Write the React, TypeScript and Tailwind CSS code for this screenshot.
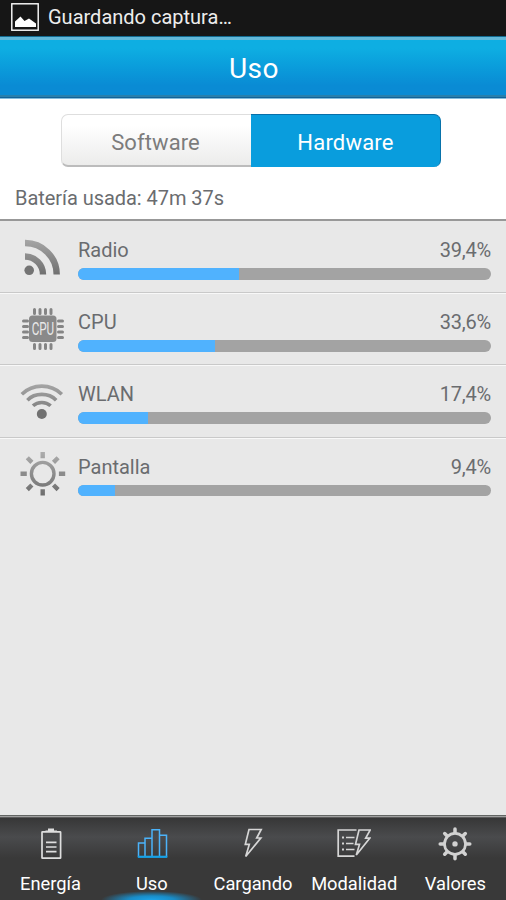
import type { ReactNode } from 'react';

interface UsageItem {
  name: string;
  value: number;
  label: string;
  icon: ReactNode;
}

interface NavItem {
  name: string;
  icon: ReactNode;
  active?: boolean;
}

function PictureIcon() {
  return (
    <svg width="28" height="28" viewBox="0 0 28 28" className="shrink-0">
      <rect x="0.8" y="0.8" width="26.4" height="26.4" fill="none" stroke="#fff" strokeWidth="1.4" />
      <path d="M4 24v-5.500L9.500 13.500l4 4.500 4.500-2.500 7 5V24z" fill="#fff" />
    </svg>
  );
}

// Shared grey gradient used by the list icons
function GreyFade({ id, height }: { id: string; height: number }) {
  return (
    <defs>
      <linearGradient id={id} gradientUnits="userSpaceOnUse" x1="0" y1="0" x2="0" y2={height}>
        <stop offset="0" stopColor="#adadad" />
        <stop offset="1" stopColor="#6c6c6c" />
      </linearGradient>
    </defs>
  );
}

function RadioIcon() {
  return (
    <svg width="46" height="46" viewBox="0 0 46 46">
      <GreyFade id="radio" height={42} />
      <g fill="none" stroke="url(#radio)" strokeWidth="6.400">
        <path d="M5 8A31.500 31.500 0 0 1 36.700 39.500" />
        <path d="M5 21.500A18 18 0 0 1 23 39.500" />
      </g>
      <circle cx="9.200" cy="35.300" r="4.800" fill="#747474" />
    </svg>
  );
}

function CpuIcon() {
  return (
    <svg width="46" height="46" viewBox="0 0 46 46">
      <g stroke="#858585" strokeWidth="3" strokeLinecap="round">
        <path d="M14.500 2.500v4M20 2.500v4M25.500 2.500v4M31 2.500v4M14.500 37.500v4M20 37.500v4M25.500 37.500v4M31 37.500v4" />
        <path d="M3.500 14h4M3.500 19.500h4M3.500 25h4M3.500 30.500h4M38.500 14h4M38.500 19.500h4M38.500 25h4M38.500 30.500h4" />
      </g>
      <rect x="9" y="8.500" width="27.500" height="26.500" rx="3.500" fill="#898989" />
      <text
        x="22.900"
        y="28.300"
        textAnchor="middle"
        textLength="22.500"
        lengthAdjust="spacingAndGlyphs"
        fill="#e8e8e8"
        fontSize="18"
        className="font-['Roboto',sans-serif]"
      >
        CPU
      </text>
    </svg>
  );
}

function WlanIcon() {
  return (
    <svg width="46" height="46" viewBox="0 0 46 46">
      <GreyFade id="wlan" height={44} />
      <g fill="none" stroke="url(#wlan)" strokeWidth="3.600">
        <path d="M1.800 15.200Q10 7.100 21.800 7.100T41.800 15.200" />
        <path d="M7.400 21.200Q13 15.400 21.800 15.400T36.200 21.200" />
        <path d="M13 26.800Q16.500 23.500 21.800 23.500T30.600 26.800" />
      </g>
      <circle cx="21.800" cy="35" r="5" fill="#717171" />
    </svg>
  );
}

function ScreenIcon() {
  return (
    <svg width="46" height="46" viewBox="0 0 46 46">
      <GreyFade id="screen" height={44} />
      <g fill="none" stroke="url(#screen)">
        <circle cx="22.700" cy="21.700" r="11.300" strokeWidth="3.400" />
        <path
          strokeWidth="4.400"
          d="M22.700 0v6.200M22.700 37.200v6.200M7.300 5.800l4.600 4.600M33.500 33l4.600 4.600M38.100 5.800l-4.600 4.600M11.900 33l-4.600 4.600"
        />
      </g>
      <path d="M.5 19.500h6.300v4.400H.5zM38.900 19.500h6.300v4.400h-6.300z" fill="#8b8b8b" />
    </svg>
  );
}

function BatteryIcon() {
  return (
    <svg width="34" height="34" viewBox="0 0 34 34">
      <g fill="none" stroke="#dedede" strokeWidth="1.700">
        <rect x="8" y="4.800" width="18.600" height="26.400" rx="0.500" />
        <path d="M12 15.300h10.500M12 20h10.500M12 24.700h10.500" />
      </g>
      <path d="M11.500 5V3.500h2.500V1.500h6v2H23V5z" fill="#dedede" />
    </svg>
  );
}

function ChartIcon() {
  return (
    <svg width="34" height="34" viewBox="0 0 34 34">
      <g fill="none" stroke="#4bb3fa" strokeWidth="1.500">
        <path d="M3.500 30V16h6.500v14M10 30V11.200h7V30M17 30V2.700h7.500V30M24.500 8.300h7V30" />
      </g>
      <path d="M2.800 28.700h29.500v2.200H2.800z" fill="#16a2e8" />
    </svg>
  );
}

function BoltIcon() {
  return (
    <svg width="34" height="34" viewBox="0 0 34 34">
      <path
        d="M13 2.500H25.200L20.700 11H24.800L9.700 29.500L13.300 17.400H9.300Z"
        fill="none"
        stroke="#d6d6d6"
        strokeWidth="1.700"
      />
    </svg>
  );
}

function ModeIcon() {
  return (
    <svg width="34" height="34" viewBox="0 0 34 34">
      <g fill="none" stroke="#d6d6d6" strokeWidth="1.700">
        <path d="M19.500 3H1.200v26.200h16.300" />
        <path d="M22 3h11.200l-4.500 8.200h4L19.300 28l3.200-10.600h-4z" />
        <path d="M9 10.500h8.500M9 16.500h7.500M9 22.500h8.500" />
        <path d="M5 10.500h2M5 16.500h2M5 22.500h2" strokeWidth="2" />
      </g>
    </svg>
  );
}

function GearIcon() {
  return (
    <svg width="34" height="34" viewBox="0 0 34 34">
      <g stroke="#d2d2d2" fill="none">
        <circle cx="17" cy="16.900" r="10.500" strokeWidth="2.700" />
        <path
          strokeWidth="3.500"
          strokeLinecap="round"
          d="M17 2.100v3.500M17 28.300v3.500M2.200 16.900h3.500M28.300 16.900h3.500M6.700 6.600l2 2M25.300 25.200l2 2M27.300 6.600l-2 2M8.700 25.200l-2 2"
        />
      </g>
      <circle cx="17" cy="16.900" r="2.700" fill="#d2d2d2" />
    </svg>
  );
}

const usage: UsageItem[] = [
  { name: 'Radio', value: 39.4, label: '39,4%', icon: <RadioIcon /> },
  { name: 'CPU', value: 33.6, label: '33,6%', icon: <CpuIcon /> },
  { name: 'WLAN', value: 17.4, label: '17,4%', icon: <WlanIcon /> },
  { name: 'Pantalla', value: 9.4, label: '9,4%', icon: <ScreenIcon /> },
];

const nav: NavItem[] = [
  { name: 'Energía', icon: <BatteryIcon /> },
  { name: 'Uso', icon: <ChartIcon />, active: true },
  { name: 'Cargando', icon: <BoltIcon /> },
  { name: 'Modalidad', icon: <ModeIcon /> },
  { name: 'Valores', icon: <GearIcon /> },
];

function UsageRow({ item, last }: { item: UsageItem; last: boolean }) {
  return (
    <div
      className={`flex h-[72.2px] pl-5 pr-[15px] ${last ? '' : 'border-b border-[#c9c9c9] shadow-[0_1px_0_#f8f8f8]'}`}
    >
      <div className="w-[58px] shrink-0 pt-[14px]">{item.icon}</div>
      <div className="min-w-0 flex-1 pt-[17px]">
        <div className="flex justify-between text-[20px] leading-6 text-[#6a6c6f]">
          <span>{item.name}</span>
          <span className="tracking-[-0.2px]">{item.label}</span>
        </div>
        <div className="mt-[6px] h-[11.500px] overflow-hidden rounded-full bg-[#a3a3a3]">
          <div className="h-full bg-[#50b2fe]" style={{ width: `calc(${item.value}% - 1.5px)` }} />
        </div>
      </div>
    </div>
  );
}

export default function App() {
  return (
    <div className="flex h-[900px] w-[506px] flex-col overflow-hidden bg-[#e8e8e8] font-['Roboto','Noto_Sans',sans-serif]">
      <div className="flex h-9 shrink-0 items-center gap-[9px] bg-[#161616] pb-[2px] pl-[11px] text-[20px] text-[#ededed]">
        <PictureIcon />
        <span>Guardando captura…</span>
      </div>

      <header className="flex h-[63px] shrink-0 items-center justify-center border-b border-[#83bddd] bg-linear-to-b from-[#0eaee2] from-20% to-[#0a8bd4] to-80% pt-1 pl-[2px] text-[28px] text-white shadow-[inset_0_1px_0_#126b91,inset_0_4px_0_#62b8d9,inset_0_-1px_0_#116399,inset_0_-3px_0_#287fac]">
        <span className="tracking-[0.5px]">Uso</span>
      </header>

      <section className="flex h-[122px] shrink-0 flex-col border-b-2 border-[#989898] bg-white pt-[15px]">
        <div className="ml-[61px] flex h-[53px] text-[22px]">
          <div className="flex w-[190px] items-center justify-center rounded-l-[7px] border border-r-0 border-b-2 border-[#dedede] border-b-[#bcbcbc] bg-linear-to-b from-white from-20% to-[#ececeb] pt-[5px] pr-[2px] text-[#7c7c7c]">
            <span className="tracking-[0.1px]">Software</span>
          </div>
          <div className="flex w-[190px] items-center justify-center rounded-r-[7px] border-t border-r border-t-[#086fa9] border-r-[#0872aa] bg-[#099ddd] pt-[3px] text-white">
            <span className="tracking-[0.2px]">Hardware</span>
          </div>
        </div>
        <div className="pl-[15px] pt-[19px] text-[20px] leading-6 text-[#6a6c6f]">
          <span className="tracking-[-0.05px]">Batería usada: 47m 37s</span>
        </div>
      </section>

      <main className="min-h-0 flex-1">
        {usage.map((item, i) => (
          <UsageRow key={item.name} item={item} last={i === usage.length - 1} />
        ))}
      </main>

      <nav className="grid h-[85px] shrink-0 grid-cols-5 border-t border-[#626563] bg-linear-to-b from-[#353535] via-[#4a4b4d] via-25% to-[#393939] to-50% text-[18.300px] text-white shadow-[inset_0_1px_0_#a0a0a0,inset_0_2px_0_#5b5b5b]">
        {nav.map((item) => (
          <div key={item.name} className="relative flex flex-col items-center pt-[11px]">
            {item.active && (
              <div className="absolute inset-x-0 bottom-0 h-[9px] bg-[radial-gradient(ellipse_50%_100%_at_50%_100%,#1ba4ea_0%,#198cc7_45%,transparent_100%)]" />
            )}
            {item.icon}
            <span className="relative mt-[11px] leading-6 whitespace-nowrap">{item.name}</span>
          </div>
        ))}
      </nav>
    </div>
  );
}
